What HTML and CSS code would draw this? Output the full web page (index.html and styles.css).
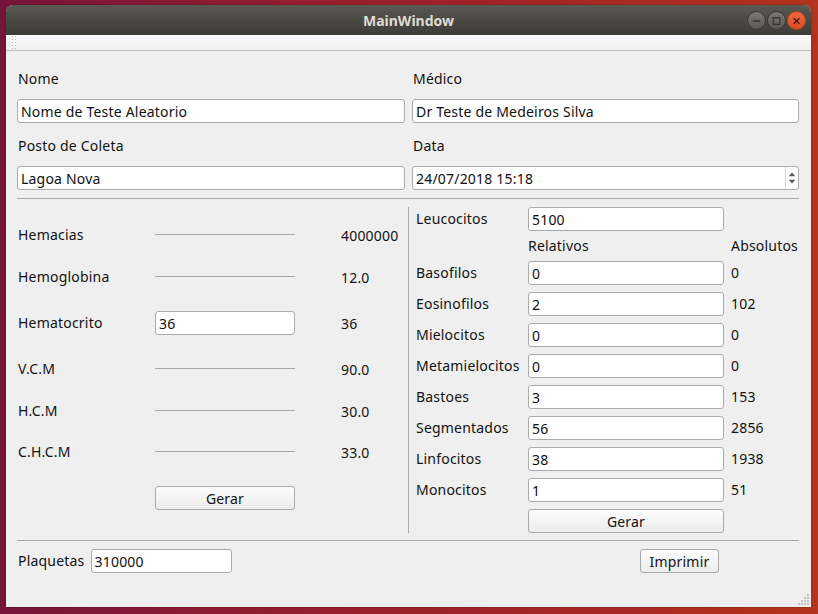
FILE: index.html
```html
<!DOCTYPE html>
<html>
<head>
<meta charset="utf-8">
<link rel="stylesheet" href="styles.css">
</head>
<body>
<div class="desktop">
  <div class="window">
    <div class="titlebar">
      <span class="title">MainWindow</span>
      <div class="wbtns">
        <span class="wbtn wmin"><svg width="18" height="18" viewBox="0 0 18 18"><line x1="5" y1="9" x2="13" y2="9" stroke="#2e2d2a" stroke-width="1.4"/></svg></span>
        <span class="wbtn wmax"><svg width="18" height="18" viewBox="0 0 18 18"><rect x="5.5" y="5.5" width="7" height="7" fill="none" stroke="#2e2d2a" stroke-width="1.2"/></svg></span>
        <span class="wbtn wclose"><svg width="18" height="18" viewBox="0 0 18 18"><path d="M6 6 L12 12 M12 6 L6 12" stroke="#3a1a10" stroke-width="1.4"/></svg></span>
      </div>
    </div>
    <div class="toolbar"><span class="handle"></span></div>
    <div class="content">
      <div class="top-grid">
        <div class="field"><span class="lbl">Nome</span><div class="input">Nome de Teste Aleatorio</div></div>
        <div class="field"><span class="lbl">Médico</span><div class="input">Dr Teste de Medeiros Silva</div></div>
        <div class="field"><span class="lbl">Posto de Coleta</span><div class="input">Lagoa Nova</div></div>
        <div class="field"><span class="lbl">Data</span>
          <div class="input spin"><span class="spin-text">24/07/2018 15:18</span>
            <span class="arrows">
              <svg width="13" height="22" viewBox="0 0 13 22"><path d="M3 9 L6.5 5 L10 9 Z" fill="#555"/><path d="M3 13 L6.5 17 L10 13 Z" fill="#555"/></svg>
            </span>
          </div>
        </div>
      </div>
      <div class="hline"></div>
      <div class="middle">
        <div class="left-panel">
          <span class="lbl">Hemacias</span><span class="rule"></span><span class="val">4000000</span>
          <span class="lbl">Hemoglobina</span><span class="rule"></span><span class="val">12.0</span>
          <span class="lbl">Hematocrito</span><div class="input">36</div><span class="val">36</span>
          <span class="lbl">V.C.M</span><span class="rule"></span><span class="val">90.0</span>
          <span class="lbl">H.C.M</span><span class="rule"></span><span class="val">30.0</span>
          <span class="lbl">C.H.C.M</span><span class="rule"></span><span class="val">33.0</span>
          <span></span><button class="btn">Gerar</button><span></span>
        </div>
        <div class="vline"></div>
        <div class="right-panel">
          <span class="lbl">Leucocitos</span><div class="input">5100</div><span></span>
          <span></span><span class="lbl head">Relativos</span><span class="val">Absolutos</span>
          <span class="lbl">Basofilos</span><div class="input">0</div><span class="val">0</span>
          <span class="lbl">Eosinofilos</span><div class="input">2</div><span class="val">102</span>
          <span class="lbl">Mielocitos</span><div class="input">0</div><span class="val">0</span>
          <span class="lbl">Metamielocitos</span><div class="input">0</div><span class="val">0</span>
          <span class="lbl">Bastoes</span><div class="input">3</div><span class="val">153</span>
          <span class="lbl">Segmentados</span><div class="input">56</div><span class="val">2856</span>
          <span class="lbl">Linfocitos</span><div class="input">38</div><span class="val">1938</span>
          <span class="lbl">Monocitos</span><div class="input">1</div><span class="val">51</span>
          <span></span><button class="btn">Gerar</button><span></span>
        </div>
      </div>
      <div class="hline hline-bottom"></div>
      <div class="bottom">
        <span class="lbl">Plaquetas</span>
        <div class="input plaq">310000</div>
        <button class="btn imprimir">Imprimir</button>
      </div>
    </div>
    <div class="grip">
      <span class="d" style="grid-area:1/4"></span>
      <span class="d" style="grid-area:2/3"></span><span class="d" style="grid-area:2/4"></span>
      <span class="d" style="grid-area:3/2"></span><span class="d" style="grid-area:3/3"></span><span class="d" style="grid-area:3/4"></span>
      <span class="d" style="grid-area:4/1"></span><span class="d" style="grid-area:4/2"></span><span class="d" style="grid-area:4/3"></span><span class="d" style="grid-area:4/4"></span>
    </div>
  </div>
</div>
</body>
</html>
```

FILE: styles.css
```css
* { box-sizing: border-box; }
html, body { margin: 0; padding: 0; }
body {
  width: 818px;
  height: 614px;
  overflow: hidden;
  font-family: "Noto Sans", "Open Sans", sans-serif;
  font-size: 14px;
  letter-spacing: 0.2px;
  color: #121212;
}
.desktop {
  width: 818px;
  height: 614px;
  padding: 5px 0 0 6px;
  background: linear-gradient(to right, #741539 0%, #8c1c32 25%, #9e2229 55%, #ad2d20 85%, #b3341c 100%);
}
.window {
  position: relative;
  width: 805px;
  height: 602px;
  background: #efefef;
  border-radius: 7px 7px 0 0;
  display: flex;
  flex-direction: column;
  box-shadow: 0 0 2px rgba(0,0,0,0.4);
}
.titlebar {
  height: 30px;
  border-radius: 7px 7px 0 0;
  background: linear-gradient(to bottom, #5b5953 0%, #4a4944 50%, #3d3c38 100%);
  display: flex;
  align-items: center;
  justify-content: center;
  position: relative;
}
.title {
  color: #dfdbd2;
  font-weight: 700;
  font-size: 14px;
  letter-spacing: 0;
}
.wbtns {
  position: absolute;
  right: 5px;
  top: 6px;
  display: flex;
  gap: 1px;
}
.wbtn {
  width: 19px;
  height: 19px;
  border-radius: 50%;
  display: flex;
  align-items: center;
  justify-content: center;
  border: 1px solid #3a3935;
}
.wmin, .wmax {
  background: linear-gradient(to bottom, #7a7872, #5a5853);
}
.wclose {
  background: linear-gradient(to bottom, #f26a3c, #e0481e);
  border-color: #b5411f;
}
.toolbar {
  height: 16px;
  background: linear-gradient(to bottom, #f9f9f9, #f1f1f1);
  border-bottom: 1px solid #bcbcbc;
  position: relative;
}
.handle {
  display: block;
  margin-left: 5px;
  width: 5px;
  height: 15px;
  background-image: radial-gradient(circle, #b8b8b8 0.8px, transparent 1px);
  background-size: 3px 3px;
}
.content {
  padding: 20px 12px 0 11px;
  display: flex;
  flex-direction: column;
}
.top-grid {
  display: grid;
  grid-template-columns: 388px 387px;
  column-gap: 7px;
  row-gap: 15px;
}
.field {
  display: flex;
  flex-direction: column;
  gap: 12px;
}
.lbl {
  line-height: 16px;
  height: 16px;
  padding-left: 1px;
  white-space: nowrap;
}
.input {
  height: 24px;
  background: #fff;
  border: 1px solid #ababab;
  border-radius: 3px;
  padding-left: 3px;
  line-height: 23px;
  white-space: nowrap;
  color: #101010;
}
.spin {
  display: flex;
  justify-content: space-between;
  padding-right: 0;
}
.arrows {
  width: 13px;
  height: 22px;
  border-left: 1px solid #d4d4d4;
  display: flex;
}
.hline {
  height: 1px;
  background: #ababab;
  margin-top: 8px;
}
.hline-bottom { margin-top: 0; }
.middle {
  display: flex;
  height: 341px;
}
.left-panel {
  width: 388px;
  padding-top: 15px;
  display: grid;
  grid-template-columns: 138px 140px 1fr;
  grid-template-rows: 42px 42px 50px 42px 42px 40px 52px;
  align-items: center;
  align-content: start;
}
.left-panel .val { padding-left: 46px; }
.rule {
  height: 1px;
  background: #a8a8a8;
  margin-top: -2px;
}
.vline {
  width: 1px;
  height: 326px;
  background: #ababab;
  margin: 8px 0 0 3px;
}
.right-panel {
  padding-top: 8px;
  display: grid;
  grid-template-columns: 119px 196px 1fr;
  grid-template-rows: 24px 16px repeat(9, 24px);
  row-gap: 7px;
  align-items: center;
  align-content: start;
}
.right-panel .lbl { padding-left: 7px; }
.right-panel .lbl.head { padding-left: 0; }
.right-panel .val { padding-left: 7px; line-height: 16px; white-space: nowrap; }
.btn {
  height: 24px;
  font-family: inherit;
  font-size: 14px;
  letter-spacing: 0.2px;
  color: #121212;
  background: linear-gradient(to bottom, #fcfcfc, #ececec);
  border: 1px solid #a9a9a9;
  border-radius: 3px;
  padding: 0;
  margin: 0;
}
.bottom {
  padding-top: 8px;
  display: flex;
  align-items: center;
}
.plaq {
  width: 141px;
  margin-left: 6px;
}
.imprimir {
  width: 79px;
  margin-left: auto;
  margin-right: 80px;
}
.grip {
  position: absolute;
  right: 2px;
  bottom: 2px;
  display: grid;
  grid-template-columns: repeat(4, 2px);
  grid-template-rows: repeat(4, 2px);
  gap: 1px;
}
.grip .d { background: #c0c0c0; }
```
